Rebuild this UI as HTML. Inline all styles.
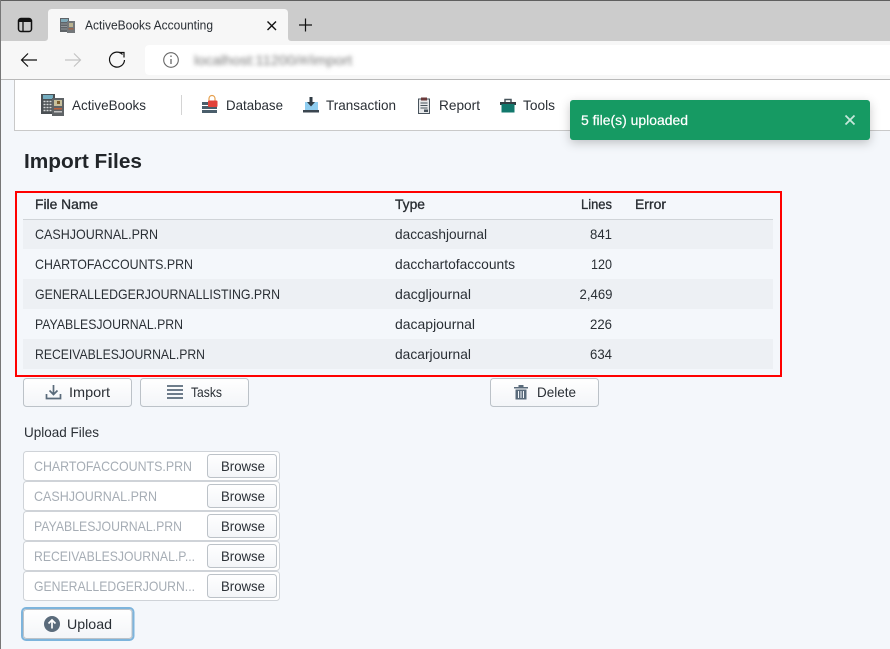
<!DOCTYPE html>
<html><head><meta charset="utf-8"><title>ActiveBooks Accounting</title>
<style>
html,body{margin:0;padding:0;width:890px;height:649px;overflow:hidden;background:#f4f7fb}
svg{display:block}
text{font-family:"Liberation Sans",sans-serif;font-size:14px;fill:#2a2f35}
.m{stroke:#212529;stroke-width:.3px}
.ph{fill:#a6adb5}
.ic{fill:#5a6b7b}
</style></head><body>
<svg width="890" height="649" viewBox="0 0 890 649" xmlns="http://www.w3.org/2000/svg">
<defs>
<linearGradient id="b" x1="0" y1="0" x2="0" y2="1"><stop offset="0" stop-color="#fff"/><stop offset="1" stop-color="#f3f5f8"/></linearGradient>
<filter id="bl" x="-5%" y="-50%" width="110%" height="200%"><feGaussianBlur stdDeviation="2"/></filter>
<filter id="sh" x="-10%" y="-30%" width="120%" height="170%"><feDropShadow dx="0" dy="3" stdDeviation="5" flood-color="#000" flood-opacity=".22"/></filter>
</defs>
<rect width="890" height="649" fill="#f4f7fb"/>
<!-- browser chrome -->
<rect width="890" height="41" fill="#cccccc"/>
<rect width="890" height="1" fill="#5f5f5f"/>
<rect y="41" width="890" height="38" fill="#f7f7f7"/>
<rect y="79" width="890" height="1" fill="#b9b9b9"/>
<path d="M44 41c3 0 4-1 4-4V13c0-3 2-4 4-4h232c2 0 4 1 4 4v24c0 3 1 4 4 4z" fill="#f7f7f7"/>
<rect x="18.500" y="18.500" width="13" height="13" rx="2.500" fill="none" stroke="#111" stroke-width="1.500"/>
<rect x="19" y="19" width="12" height="3" fill="#111"/>
<path d="M23 22v9.500" fill="none" stroke="#111" stroke-width="1.300"/>
<g>
<rect x="60" y="18" width="9" height="14" fill="#5f6468"/><rect x="61" y="19" width="7" height="3" fill="#7fa9b8"/>
<path d="M61.500 24h6M61.500 26.500h6M61.500 29h6" stroke="#c5c8ca" stroke-dasharray="1 1"/>
<rect x="67" y="21" width="8" height="12" fill="#73777a"/><rect x="69" y="23" width="4" height="4" fill="#b9b290"/><rect x="68.500" y="28" width="5" height="1.500" fill="#a0664a"/>
</g>
<text x="85" y="29.500" textLength="128" lengthAdjust="spacingAndGlyphs" style="font-size:13px">ActiveBooks Accounting</text>
<path d="M267.500 21.500l8.500 8.500M276 21.500l-8.500 8.500" stroke="#111" stroke-width="1.400" fill="none"/>
<path d="M305.500 18.500v13M299 25h13" stroke="#111" stroke-width="1.200" fill="none"/>
<path d="M37 60H21.500M28 53.500L21.500 60l6.500 6.500" stroke="#111" stroke-width="1.200" fill="none"/>
<path d="M65 60h15.500M74 53.500l6.500 6.500-6.500 6.500" stroke="#c4c4c4" stroke-width="1.200" fill="none"/>
<path d="M122.500 54.500A7.500 7.500 0 1 0 124.500 60" stroke="#111" stroke-width="1.200" fill="none"/>
<path d="M119 52.500h5v5" stroke="#111" stroke-width="1.200" fill="none"/>
<path d="M149 45h741v30H149a4 4 0 0 1-4-4V49a4 4 0 0 1 4-4z" fill="#fff"/>
<circle cx="171" cy="60" r="7.300" fill="none" stroke="#666" stroke-width="1.100"/>
<path d="M171 59v5M171 55.500v1.500" stroke="#666" stroke-width="1.300"/>
<text x="194" y="65" textLength="158" lengthAdjust="spacingAndGlyphs" filter="url(#bl)" style="fill:#777">localhost:11200/#/import</text>
<!-- nav -->
<rect x="14" y="80" width="876" height="51" fill="#c9c9c9"/>
<rect x="15" y="80" width="875" height="50" fill="#fff"/>
<g>
<rect x="41" y="94" width="14" height="20" fill="#4b5054"/>
<rect x="43" y="95" width="10" height="4" fill="#74adc0"/>
<path d="M43.500 101.500h9M43.500 104.500h9M43.500 107.500h9M43.500 110.500h9" stroke="#d5d7d8" stroke-width="1.500" stroke-dasharray="2 1"/>
<rect x="52" y="98" width="12" height="18" fill="#5f6366"/>
<rect x="54" y="100" width="8" height="6" fill="#c8c09c"/><rect x="57" y="101" width="3" height="3" fill="#7a5c2c"/>
<rect x="54" y="108" width="8" height="1.500" fill="#b8603c"/><rect x="54" y="111" width="8" height="1.500" fill="#c2c2c2"/>
</g>
<text x="72" y="110" textLength="74" lengthAdjust="spacingAndGlyphs">ActiveBooks</text>
<rect x="181" y="95" width="1" height="20" fill="#d4d4d4"/>
<g>
<rect x="202" y="102" width="15" height="3" fill="#4a5e6b"/><rect x="202" y="106" width="15" height="3" fill="#4a5e6b"/><rect x="202" y="110" width="15" height="3" fill="#4a5e6b"/>
<path d="M209 101v-2.500a3 3 0 0 1 6 0v2.500" fill="none" stroke="#e6a04e" stroke-width="1.200"/>
<rect x="208" y="100.500" width="9.500" height="6.500" rx="1" fill="#e2423a"/>
</g>
<text x="226" y="110" textLength="57" lengthAdjust="spacingAndGlyphs">Database</text>
<g>
<rect x="305" y="102" width="13" height="9" fill="#8fcdf0"/>
<rect x="303" y="110" width="16" height="2.500" fill="#3b4650"/>
<path d="M309.500 97h3v5h2.500l-4 4.500-4-4.500h2.500z" fill="#2f3b44"/>
</g>
<text x="326" y="110" textLength="70" lengthAdjust="spacingAndGlyphs">Transaction</text>
<g>
<rect x="418.500" y="99" width="11" height="14.500" fill="#e6e8ea" stroke="#48535c"/>
<rect x="421" y="97.500" width="6" height="3" fill="#6a3a3a"/>
<path d="M420.500 103h7M420.500 105.500h7M420.500 108h7" stroke="#48535c"/>
<rect x="424" y="109.500" width="4" height="2.500" fill="#48535c"/>
</g>
<text x="439" y="110" textLength="41" lengthAdjust="spacingAndGlyphs">Report</text>
<g>
<rect x="500" y="102" width="16" height="3" fill="#333d42"/>
<rect x="501.500" y="104" width="13" height="8.500" fill="#12786c"/>
<path d="M505 102v-2.500h6v2.500" fill="none" stroke="#48555c" stroke-width="1.500"/>
</g>
<text x="523" y="110" textLength="32" lengthAdjust="spacingAndGlyphs">Tools</text>
<!-- toast -->
<rect x="570" y="100" width="300" height="40" rx="3" fill="#129a63" filter="url(#sh)"/>
<text x="581" y="125" textLength="107" lengthAdjust="spacingAndGlyphs" style="fill:#fff;stroke:#fff;stroke-width:.2px">5 file(s) uploaded</text>
<path d="M845.500 115.500l9 9M854.500 115.500l-9 9" stroke="#c5e8da" stroke-width="1.800" fill="none"/>
<!-- heading -->
<text x="24" y="168" textLength="118" lengthAdjust="spacingAndGlyphs" font-weight="bold" style="font-size:20px;fill:#212529">Import Files</text>
<!-- table -->
<rect x="23" y="219" width="750" height="1" fill="#d0d4d8"/>
<rect x="23" y="220" width="750" height="29" fill="#edf0f4"/>
<rect x="23" y="279" width="750" height="30" fill="#edf0f4"/>
<rect x="23" y="339" width="750" height="30" fill="#edf0f4"/>
<rect x="16" y="192" width="765" height="184" fill="none" stroke="#ff0000" stroke-width="2"/>
<text class="m" x="35" y="209" textLength="63" lengthAdjust="spacingAndGlyphs">File Name</text>
<text class="m" x="395" y="209" textLength="30" lengthAdjust="spacingAndGlyphs">Type</text>
<text class="m" x="581" y="209" textLength="31" lengthAdjust="spacingAndGlyphs">Lines</text>
<text class="m" x="635" y="209" textLength="31" lengthAdjust="spacingAndGlyphs">Error</text>
<text x="35" y="239" textLength="123" lengthAdjust="spacingAndGlyphs">CASHJOURNAL.PRN</text>
<text x="35" y="269" textLength="158" lengthAdjust="spacingAndGlyphs">CHARTOFACCOUNTS.PRN</text>
<text x="35" y="299" textLength="245" lengthAdjust="spacingAndGlyphs">GENERALLEDGERJOURNALLISTING.PRN</text>
<text x="35" y="329" textLength="148" lengthAdjust="spacingAndGlyphs">PAYABLESJOURNAL.PRN</text>
<text x="35" y="359" textLength="170" lengthAdjust="spacingAndGlyphs">RECEIVABLESJOURNAL.PRN</text>
<text x="395" y="239" textLength="92" lengthAdjust="spacingAndGlyphs">daccashjournal</text>
<text x="395" y="269" textLength="120" lengthAdjust="spacingAndGlyphs">dacchartofaccounts</text>
<text x="395" y="299" textLength="76" lengthAdjust="spacingAndGlyphs">dacgljournal</text>
<text x="395" y="329" textLength="80" lengthAdjust="spacingAndGlyphs">dacapjournal</text>
<text x="395" y="359" textLength="76" lengthAdjust="spacingAndGlyphs">dacarjournal</text>
<text x="590" y="239" textLength="22" lengthAdjust="spacingAndGlyphs">841</text>
<text x="591" y="269" textLength="21" lengthAdjust="spacingAndGlyphs">120</text>
<text x="579.500" y="299" textLength="33" lengthAdjust="spacingAndGlyphs">2,469</text>
<text x="590" y="329" textLength="22" lengthAdjust="spacingAndGlyphs">226</text>
<text x="590" y="359" textLength="22" lengthAdjust="spacingAndGlyphs">634</text>
<!-- action buttons -->
<rect x="23.500" y="378.500" width="108" height="28" rx="3" fill="url(#b)" stroke="#bcc2c8"/>
<rect x="140.500" y="378.500" width="108" height="28" rx="3" fill="url(#b)" stroke="#bcc2c8"/>
<rect x="490.500" y="378.500" width="108" height="28" rx="3" fill="url(#b)" stroke="#bcc2c8"/>
<path d="M53.500 385v9M49.500 390.500l4 4 4-4M46.500 394v4.500h14V394" fill="none" stroke="#5a6b7b" stroke-width="1.700"/>
<text x="69" y="397" textLength="41" lengthAdjust="spacingAndGlyphs">Import</text>
<path d="M167 386h16M167 390h16M167 394h16M167 398h16" stroke="#5a6b7b" stroke-width="1.700"/>
<text x="191" y="397" textLength="31" lengthAdjust="spacingAndGlyphs">Tasks</text>
<path d="M514 387h14v1.500h-14zM518.500 387v-2h5v2z" class="ic"/>
<path d="M515.500 389.500h11v10h-11z" class="ic"/>
<path d="M518.500 391v7M521 391v7M523.500 391v7" stroke="#f4f7fb"/>
<text x="537" y="397" textLength="39" lengthAdjust="spacingAndGlyphs">Delete</text>
<text x="24" y="437" textLength="75" lengthAdjust="spacingAndGlyphs">Upload Files</text>
<!-- upload rows -->
<g fill="#fff" stroke="#cfd3d8">
<rect x="23.500" y="451.500" width="256" height="29" rx="3"/>
<rect x="23.500" y="481.500" width="256" height="29" rx="3"/>
<rect x="23.500" y="511.500" width="256" height="29" rx="3"/>
<rect x="23.500" y="541.500" width="256" height="29" rx="3"/>
<rect x="23.500" y="571.500" width="256" height="29" rx="3"/>
</g>
<g fill="url(#b)" stroke="#bcc2c8">
<rect x="207.500" y="454.500" width="69" height="23" rx="3"/>
<rect x="207.500" y="484.500" width="69" height="23" rx="3"/>
<rect x="207.500" y="514.500" width="69" height="23" rx="3"/>
<rect x="207.500" y="544.500" width="69" height="23" rx="3"/>
<rect x="207.500" y="574.500" width="69" height="23" rx="3"/>
</g>
<text class="ph" x="34" y="471" textLength="158" lengthAdjust="spacingAndGlyphs">CHARTOFACCOUNTS.PRN</text>
<text class="ph" x="34" y="501" textLength="123" lengthAdjust="spacingAndGlyphs">CASHJOURNAL.PRN</text>
<text class="ph" x="34" y="531" textLength="148" lengthAdjust="spacingAndGlyphs">PAYABLESJOURNAL.PRN</text>
<text class="ph" x="34" y="561" textLength="161" lengthAdjust="spacingAndGlyphs">RECEIVABLESJOURNAL.P...</text>
<text class="ph" x="34" y="591" textLength="161" lengthAdjust="spacingAndGlyphs">GENERALLEDGERJOURN...</text>
<text x="221" y="471" textLength="44" lengthAdjust="spacingAndGlyphs">Browse</text>
<text x="221" y="501" textLength="44" lengthAdjust="spacingAndGlyphs">Browse</text>
<text x="221" y="531" textLength="44" lengthAdjust="spacingAndGlyphs">Browse</text>
<text x="221" y="561" textLength="44" lengthAdjust="spacingAndGlyphs">Browse</text>
<text x="221" y="591" textLength="44" lengthAdjust="spacingAndGlyphs">Browse</text>
<!-- upload button -->
<rect x="22" y="608" width="111.500" height="32" rx="4" fill="none" stroke="#7db4dc" stroke-width="2"/>
<rect x="23.500" y="609.500" width="108.500" height="29" rx="3" fill="url(#b)" stroke="#bcc2c8"/>
<circle cx="52" cy="624" r="8" class="ic"/>
<path d="M52 628.500v-8M48.500 623.500l3.500-3.500 3.500 3.500" fill="none" stroke="#fff" stroke-width="1.700"/>
<text x="67" y="629" textLength="45" lengthAdjust="spacingAndGlyphs">Upload</text>
<!-- left window edge -->
<rect x="0" y="0" width="1" height="649" fill="#777"/>
</svg>
</body></html>
